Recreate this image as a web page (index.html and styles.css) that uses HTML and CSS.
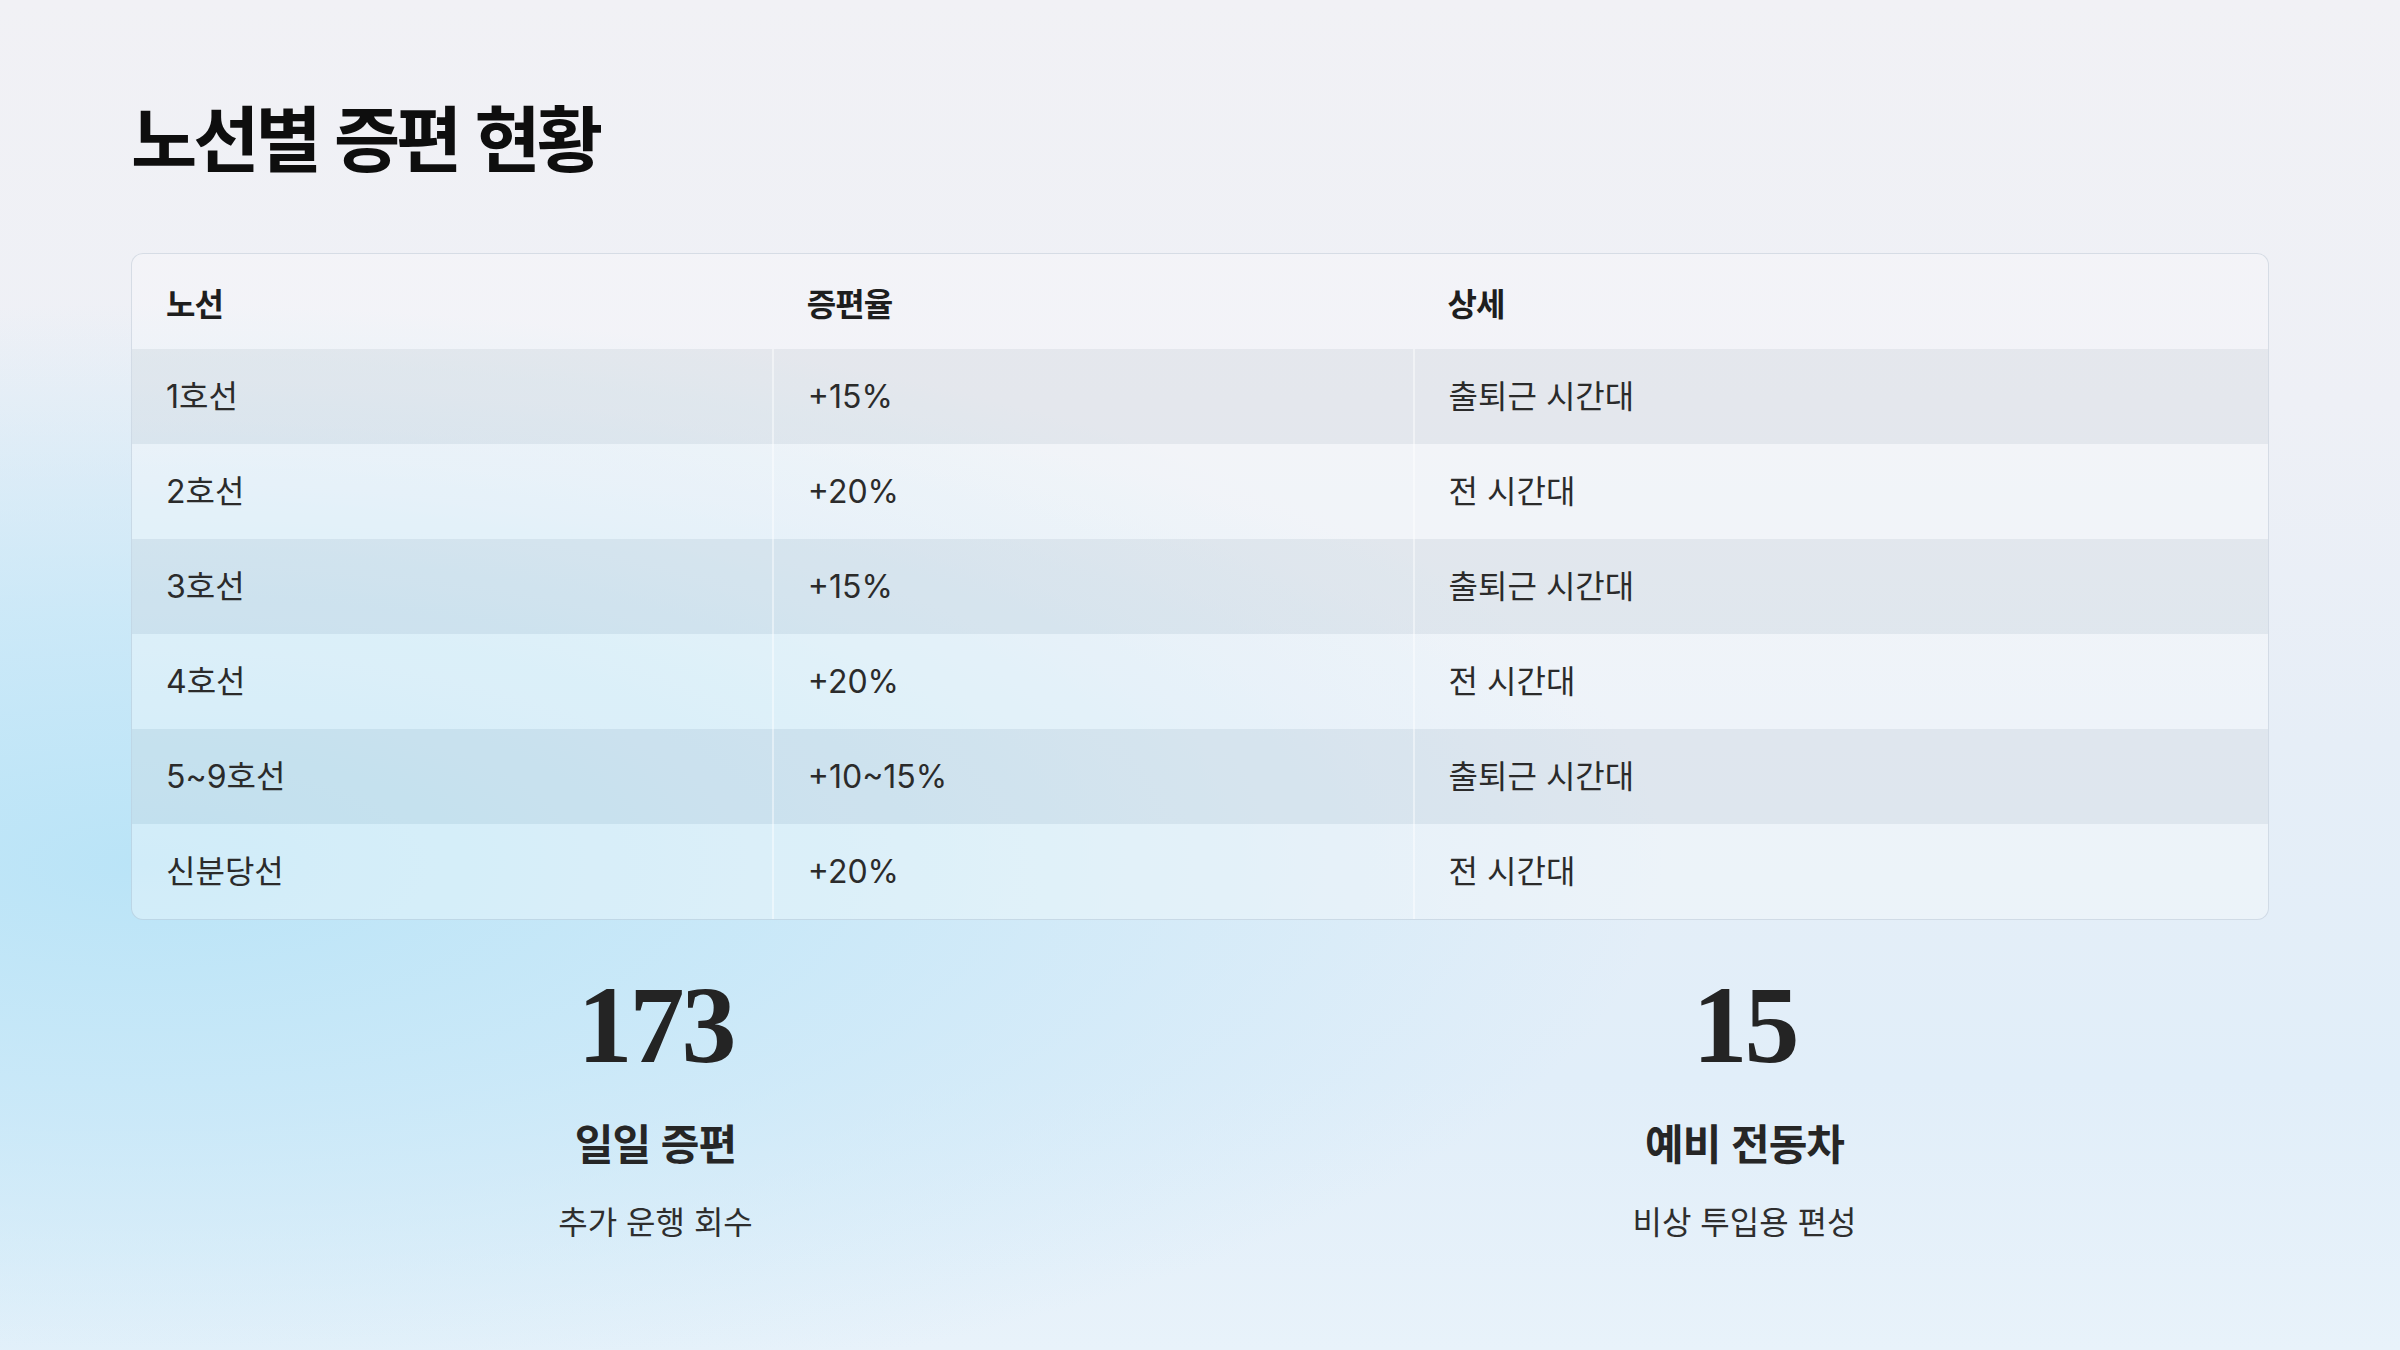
FILE: index.html
```html
<!DOCTYPE html>
<html lang="ko">
<head>
<meta charset="utf-8">
<title>노선별 증편 현황</title>
<link rel="stylesheet" href="styles.css">
</head>
<body>
<main class="slide">
  <h1 class="title">노선별 증편 현황</h1>
  <div class="table-card">
    <table class="routes">
      <colgroup>
        <col class="c-route">
        <col class="c-rate">
        <col class="c-detail">
      </colgroup>
      <thead>
        <tr><th>노선</th><th>증편율</th><th>상세</th></tr>
      </thead>
      <tbody>
        <tr><td>1호선</td><td>+15%</td><td>출퇴근 시간대</td></tr>
        <tr><td>2호선</td><td>+20%</td><td>전 시간대</td></tr>
        <tr><td>3호선</td><td>+15%</td><td>출퇴근 시간대</td></tr>
        <tr><td>4호선</td><td>+20%</td><td>전 시간대</td></tr>
        <tr><td>5~9호선</td><td>+10~15%</td><td>출퇴근 시간대</td></tr>
        <tr><td>신분당선</td><td>+20%</td><td>전 시간대</td></tr>
      </tbody>
    </table>
  </div>
  <section class="stats">
    <div class="stat">
      <div class="stat-num">173</div>
      <div class="stat-label">일일 증편</div>
      <div class="stat-desc">추가 운행 회수</div>
    </div>
    <div class="stat">
      <div class="stat-num">15</div>
      <div class="stat-label">예비 전동차</div>
      <div class="stat-desc">비상 투입용 편성</div>
    </div>
  </section>
</main>
</body>
</html>
```

FILE: styles.css
```css
html, body {
  margin: 0;
  padding: 0;
}
body {
  width: 2400px;
  height: 1350px;
  overflow: hidden;
  font-family: Inter, "Noto Sans CJK KR", sans-serif;
  color: #2a2a2a;
  background:
    radial-gradient(ellipse 1900px 700px at 6% 64%, rgba(186, 228, 247, 1) 0%, rgba(196, 231, 248, 0.8) 35%, rgba(215, 236, 249, 0) 80%),
    linear-gradient(180deg, #f1f1f5 0%, #eef0f6 30%, #e6eef7 55%, #e1eef9 80%, #e8f2fa 100%);
}
.slide {
  box-sizing: border-box;
  width: 2400px;
  height: 1350px;
  padding: 92px 131px 0 131px;
}
.title {
  margin: 0;
  font-family: "Noto Sans CJK KR", sans-serif;
  font-size: 72px;
  line-height: 1.2;
  font-weight: 700;
  letter-spacing: -4px;
  color: #0e0e0e;
}
.table-card {
  margin-top: 75px;
  border: 1px solid rgba(150, 165, 185, 0.3);
  border-radius: 12px;
  overflow: hidden;
  background: rgba(255, 255, 255, 0.24);
}
.routes {
  width: 100%;
  table-layout: fixed;
  border-collapse: collapse;
}
.c-route { width: 30%; }
.c-rate { width: 30%; }
.c-detail { width: 40%; }
.routes th,
.routes td {
  height: 95px;
  box-sizing: border-box;
  padding: 0 34px;
  text-align: left;
  font-size: 32px;
  line-height: 1.2;
}
.routes th {
  font-family: "Noto Sans CJK KR", sans-serif;
  font-weight: 700;
  letter-spacing: -1px;
  color: #1e1e1e;
}
.routes td {
  font-weight: 400;
  color: #2b2b2b;
}
.routes td + td {
  border-left: 2px solid rgba(255, 255, 255, 0.45);
}
.routes tbody tr:nth-child(odd) {
  background: rgba(110, 130, 150, 0.1);
}
.routes tbody tr:nth-child(even) {
  background: rgba(255, 255, 255, 0.12);
}
.stats {
  margin-top: 50px;
  display: grid;
  grid-template-columns: 1fr 1fr;
  column-gap: 40px;
  text-align: center;
}
.stat-num {
  font-family: "Liberation Serif", serif;
  font-weight: 700;
  font-size: 110px;
  line-height: 1;
  letter-spacing: -3px;
  color: #242424;
}
.stat-label {
  margin-top: 37px;
  font-family: "Noto Sans CJK KR", sans-serif;
  font-weight: 700;
  font-size: 42px;
  line-height: 1.2;
  letter-spacing: -1px;
  color: #262626;
}
.stat-desc {
  margin-top: 33px;
  font-family: "Noto Sans CJK KR", sans-serif;
  font-weight: 400;
  font-size: 32px;
  line-height: 1.2;
  color: #2e2e2e;
}
```
